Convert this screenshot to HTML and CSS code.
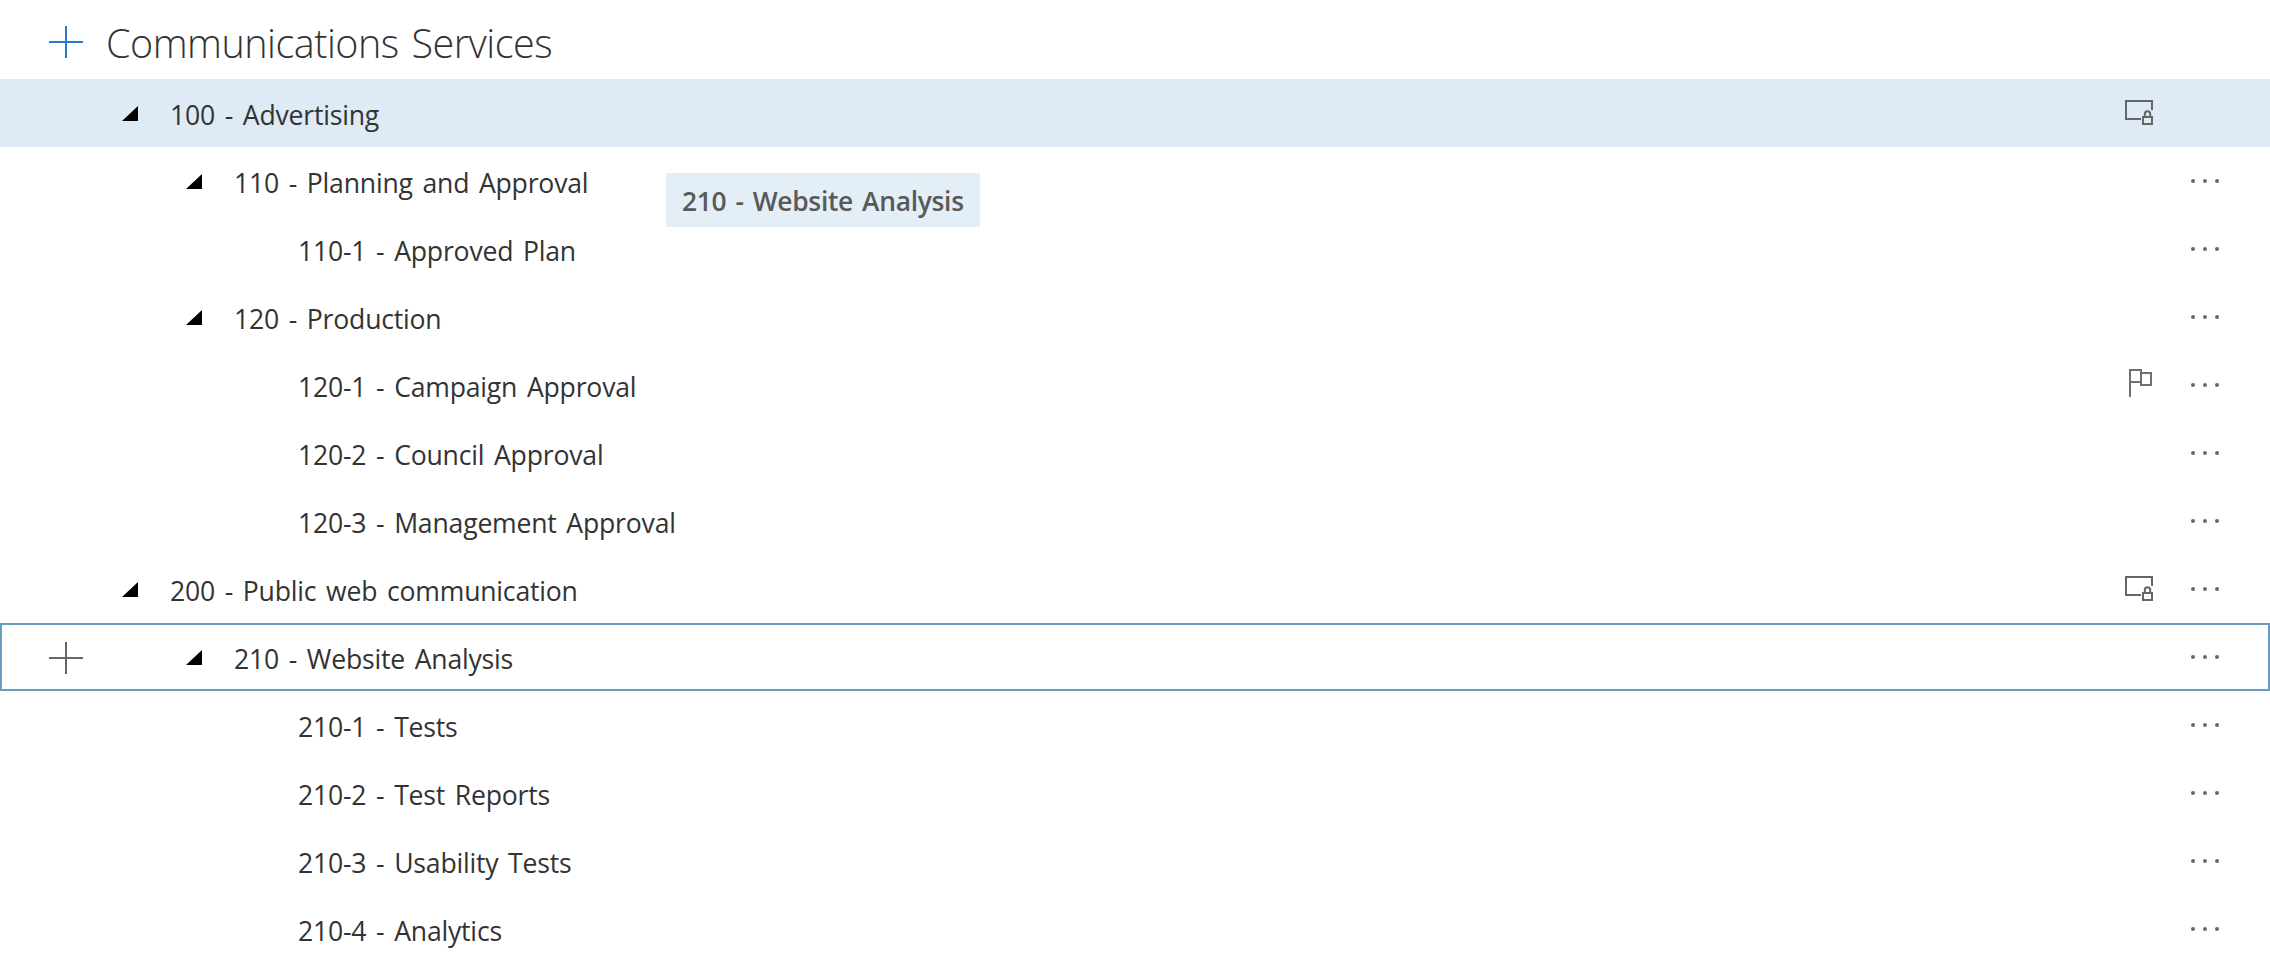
FILE: index.html
```html
<!DOCTYPE html>
<html lang="en">
<head>
<meta charset="utf-8">
<title>Communications Services</title>
<link rel="stylesheet" href="styles.css">
</head>
<body>
<svg class="defs" width="0" height="0" aria-hidden="true">
  <symbol id="plus" viewBox="0 0 34 32"><path d="M0 16H34M17 0V32" fill="none" stroke="currentColor" stroke-width="2"/></symbol>
  <symbol id="caret" viewBox="0 0 16 15"><path d="M16 0V15H0Z" fill="#000"/></symbol>
  <symbol id="lock" viewBox="0 0 28 25"><path d="M27 10V1H1V19H16" fill="none" stroke="currentColor" stroke-width="2"/><path d="M18 17H27V24H18ZM19.800 17V14A2.700 2.700 0 0 1 25.200 14V17" fill="none" stroke="currentColor" stroke-width="2"/></symbol>
  <symbol id="flag" viewBox="0 0 23 28"><path d="M1 28V1H12V13H1M12 4H22V16H12V13" fill="none" stroke="currentColor" stroke-width="2"/></symbol>
  <symbol id="more" viewBox="0 0 28 4"><circle cx="2" cy="2" r="2"/><circle cx="14" cy="2" r="2"/><circle cx="26" cy="2" r="2"/></symbol>
</svg>
<main class="tree">
  <header class="title-row">
    <span class="gutter"><svg class="plus plus-blue"><use href="#plus"/></svg></span>
    <h1 class="title">Communications Services</h1>
  </header>
  <div class="row row-selected level-1">
    <span class="gutter"></span><span class="indent"><svg class="caret"><use href="#caret"/></svg></span>
    <span class="label">100 - Advertising</span>
    <span class="status"><svg class="lock"><use href="#lock"/></svg></span><span class="more-slot"></span>
  </div>
  <div class="row level-2">
    <span class="gutter"></span><span class="indent"><svg class="caret"><use href="#caret"/></svg></span>
    <span class="label">110 - Planning and Approval</span>
    <span class="status"></span><span class="more-slot"><svg class="more"><use href="#more"/></svg></span>
  </div>
  <div class="row level-3">
    <span class="gutter"></span><span class="indent"></span>
    <span class="label">110-1 - Approved Plan</span>
    <span class="status"></span><span class="more-slot"><svg class="more"><use href="#more"/></svg></span>
  </div>
  <div class="row level-2">
    <span class="gutter"></span><span class="indent"><svg class="caret"><use href="#caret"/></svg></span>
    <span class="label">120 - Production</span>
    <span class="status"></span><span class="more-slot"><svg class="more"><use href="#more"/></svg></span>
  </div>
  <div class="row level-3">
    <span class="gutter"></span><span class="indent"></span>
    <span class="label">120-1 - Campaign Approval</span>
    <span class="status"><svg class="flag"><use href="#flag"/></svg></span><span class="more-slot"><svg class="more"><use href="#more"/></svg></span>
  </div>
  <div class="row level-3">
    <span class="gutter"></span><span class="indent"></span>
    <span class="label">120-2 - Council Approval</span>
    <span class="status"></span><span class="more-slot"><svg class="more"><use href="#more"/></svg></span>
  </div>
  <div class="row level-3">
    <span class="gutter"></span><span class="indent"></span>
    <span class="label">120-3 - Management Approval</span>
    <span class="status"></span><span class="more-slot"><svg class="more"><use href="#more"/></svg></span>
  </div>
  <div class="row level-1">
    <span class="gutter"></span><span class="indent"><svg class="caret"><use href="#caret"/></svg></span>
    <span class="label">200 - Public web communication</span>
    <span class="status"><svg class="lock"><use href="#lock"/></svg></span><span class="more-slot"><svg class="more"><use href="#more"/></svg></span>
  </div>
  <div class="row row-focused level-2">
    <span class="gutter"><svg class="plus plus-grey"><use href="#plus"/></svg></span><span class="indent"><svg class="caret"><use href="#caret"/></svg></span>
    <span class="label">210 - Website Analysis</span>
    <span class="status"></span><span class="more-slot"><svg class="more"><use href="#more"/></svg></span>
  </div>
  <div class="row level-3">
    <span class="gutter"></span><span class="indent"></span>
    <span class="label">210-1 - Tests</span>
    <span class="status"></span><span class="more-slot"><svg class="more"><use href="#more"/></svg></span>
  </div>
  <div class="row level-3">
    <span class="gutter"></span><span class="indent"></span>
    <span class="label">210-2 - Test Reports</span>
    <span class="status"></span><span class="more-slot"><svg class="more"><use href="#more"/></svg></span>
  </div>
  <div class="row level-3">
    <span class="gutter"></span><span class="indent"></span>
    <span class="label">210-3 - Usability Tests</span>
    <span class="status"></span><span class="more-slot"><svg class="more"><use href="#more"/></svg></span>
  </div>
  <div class="row level-3">
    <span class="gutter"></span><span class="indent"></span>
    <span class="label">210-4 - Analytics</span>
    <span class="status"></span><span class="more-slot"><svg class="more"><use href="#more"/></svg></span>
  </div>
  <div class="drag-ghost">210 - Website Analysis</div>
</main>
</body>
</html>
```
FILE: styles.css
```css
* { box-sizing: border-box; }
html, body { margin: 0; padding: 0; background: #fff; }
body {
  font-family: "Open Sans", "Noto Sans", sans-serif;
  color: #333;
  overflow: hidden;
}
.defs { position: absolute; }
.tree { position: relative; height: 977px; }

.title-row { display: flex; align-items: center; height: 79px; }
.title {
  margin: 0;
  font-size: 39.5px;
  font-weight: 300;
  letter-spacing: -0.5px;
  word-spacing: 3px;
  line-height: 1;
  color: #333;
  padding-top: 8px;
}
.title-row .gutter { width: 106px; }

.row { display: flex; align-items: center; height: 68px; font-size: 26.6px; letter-spacing: -0.2px; word-spacing: 3px; }
.gutter { flex: none; width: 122px; padding-left: 49px; display: flex; align-items: center; }
.indent { flex: none; display: flex; align-items: center; }
.level-1 .indent { width: 48px; }
.level-2 .indent { width: 112px; padding-left: 64px; }
.level-3 .indent { width: 176px; }
.label { flex: 1; white-space: nowrap; padding-top: 4px; }
.status { flex: none; width: 66px; display: flex; align-items: center; }
.more-slot { flex: none; width: 79px; display: flex; align-items: center; }

.row-selected { background: #deeaf6; }
.row-focused { border: 2px solid #6b9cbd; }
.row-focused .gutter { width: 120px; padding-left: 47px; }
.row-focused .more-slot { width: 77px; }

.plus { width: 34px; height: 32px; display: block; }
.plus-blue { color: #2b78cf; margin-top: 5px; }
.plus-grey { color: #666; margin-top: 2px; }
.caret { width: 16px; height: 15px; display: block; }
.lock { width: 28px; height: 25px; color: #666; display: block; margin-top: -1px; }
.flag { width: 23px; height: 28px; color: #6f6f6f; display: block; margin-left: 4px; margin-top: -4px; }
.more { width: 28px; height: 4px; fill: #6a6a6a; display: block; }

.drag-ghost {
  position: absolute;
  left: 666px;
  top: 173px;
  width: 314px;
  height: 54px;
  padding-left: 16px;
  padding-top: 2px;
  display: flex;
  align-items: center;
  background: #e4eef7;
  color: #595959;
  font-size: 26.4px;
  font-weight: 600;
  letter-spacing: -0.3px;
  word-spacing: 2.500px;
  white-space: nowrap;
}
```
